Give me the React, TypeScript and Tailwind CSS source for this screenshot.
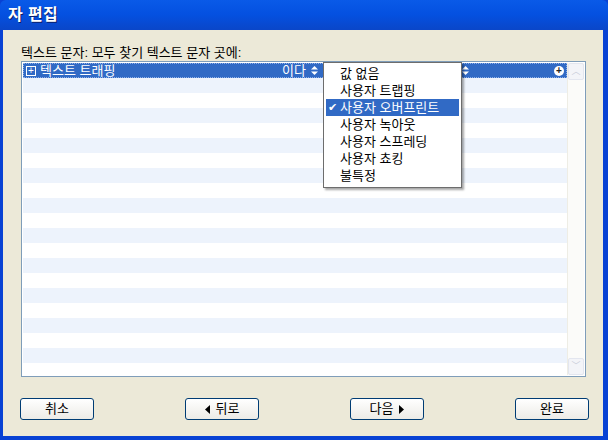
import React from "react";

const font = { fontFamily: '"Liberation Sans", "Noto Sans CJK KR", sans-serif' };

function UpDown({ className = "" }: { className?: string }) {
  return (
    <svg width="7" height="9" viewBox="0 0 7 9" className={className}>
      <path d="M3.5 0 L7 3.5 L0 3.5 Z" fill="currentColor" />
      <path d="M0 5.5 L7 5.5 L3.5 9 Z" fill="currentColor" />
    </svg>
  );
}

function Button({ children }: { children: React.ReactNode }) {
  return (
    <div className="w-[74px] h-[22px] rounded-[3px] border border-[#003c74] bg-gradient-to-b from-white to-[#ecebe6] flex items-center justify-center gap-[6px] text-[13px] leading-[16px] text-black">
      {children}
    </div>
  );
}

export default function App() {
  const items = ["값 없음", "사용자 트랩핑", "사용자 오버프린트", "사용자 녹아웃", "사용자 스프레딩", "사용자 쵸킹", "불특정"];
  const rows = Array.from({ length: 21 });

  return (
    <div className="w-[608px] h-[440px] bg-[#0842d4] flex flex-col overflow-hidden" style={font}>
      <div className="h-[30px] shrink-0 rounded-t-[6px] bg-gradient-to-b from-[#0a5ae8] via-[#0450e0] to-[#0a46c8] flex items-center px-2">
        <span className="text-white font-bold text-[16px] tracking-wide [text-shadow:1px_1px_0_#0a1e6a]">자 편집</span>
      </div>
      <div className="flex-1 ml-[3px] mr-[5px] mb-[4px] bg-[#ece9d8] flex flex-col pl-[18px] pr-[17px] pt-[15px]">
        <div className="text-[13px] leading-[15px] text-black">텍스트 문자: 모두 찾기 텍스트 문자 곳에:</div>
        <div className="relative mt-[1px] w-[565px] h-[316px] border border-[#7f9db9] bg-white flex p-[1px]">
          <div className="flex-1 flex flex-col overflow-hidden">
            {rows.map((_, i) =>
              i === 0 ? (
                <div key={i} className="h-[15px] shrink-0 bg-[#316ac5] border border-dotted border-[#8fb0e8] flex items-center text-white text-[13px] leading-[13px]">
                  <div className="w-[294px] flex items-center">
                    <span className="ml-[2px] w-[10px] h-[10px] border border-white flex items-center justify-center text-[10px] leading-none">+</span>
                    <span className="ml-[4px]">텍스트 트래핑</span>
                    <span className="ml-auto">이다</span>
                    <UpDown className="text-white ml-[5px]" />
                  </div>
                  <span className="w-[144px]" />
                  <UpDown className="text-white" />
                  <span className="ml-auto mr-[2px] w-[10px] h-[10px] rounded-full bg-white flex items-center justify-center text-[#222] text-[10px] font-bold leading-none">+</span>
                </div>
              ) : (
                <div key={i} className={`h-[15px] shrink-0 ${i % 2 === 1 ? "bg-[#edf3fc]" : "bg-white"}`} />
              )
            )}
          </div>
          <div className="w-[17px] flex flex-col bg-[#fbfbf9] border-l border-[#eeede5]">
            <div className="h-[17px] rounded-[2px] border border-[#e3e6ef] bg-[#f3f4f8] flex items-center justify-center text-[#c9cdd8] text-[9px] leading-none">︿</div>
            <div className="flex-1" />
            <div className="h-[17px] rounded-[2px] border border-[#e3e6ef] bg-[#f3f4f8] flex items-center justify-center text-[#c9cdd8] text-[9px] leading-none">﹀</div>
          </div>

          <div className="absolute left-[301px] top-0 w-[139px] h-[126px] bg-white border border-[#6d6d6d] shadow-[2px_2px_2px_rgba(0,0,0,0.35)] py-[2px] px-[2px] flex flex-col">
            {items.map((t, i) => (
              <div
                key={t}
                className={`h-[17px] shrink-0 flex items-center text-[13px] leading-[17px] ${i === 2 ? "bg-[#316ac5] text-white" : "text-black"}`}
              >
                <span className="w-[14px] pl-[2px] text-[11px] leading-[17px]">{i === 2 ? "✔" : ""}</span>
                <span>{t}</span>
              </div>
            ))}
          </div>
        </div>
        <div className="mt-[21px] flex justify-between -ml-[1px] mr-[-3px]">
          <Button>취소</Button>
          <Button>
            <svg width="5" height="9" viewBox="0 0 5 9"><path d="M5 0 L0 4.5 L5 9 Z" fill="#000" /></svg>
            <span>뒤로</span>
          </Button>
          <Button>
            <span>다음</span>
            <svg width="5" height="9" viewBox="0 0 5 9"><path d="M0 0 L5 4.5 L0 9 Z" fill="#000" /></svg>
          </Button>
          <Button>완료</Button>
        </div>
      </div>
    </div>
  );
}
